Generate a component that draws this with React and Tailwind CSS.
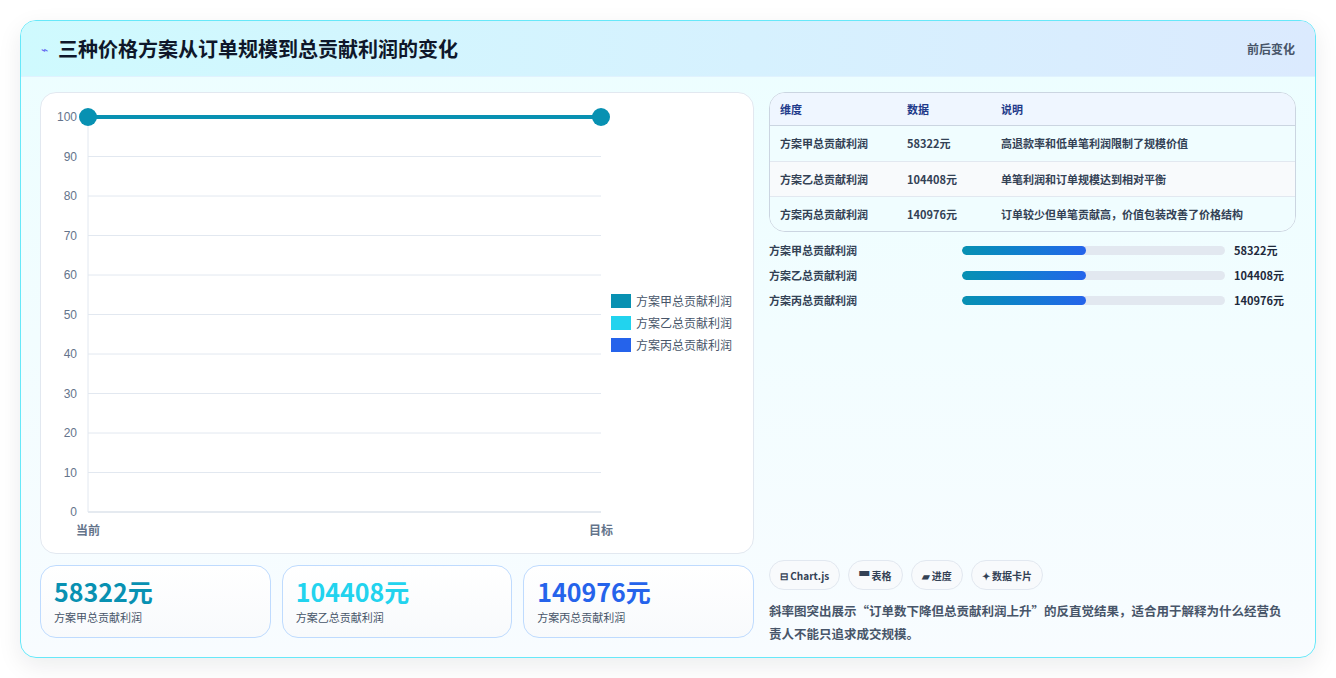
const rows = [
  { name: "方案甲总贡献利润", value: "58322元", note: "高退款率和低单笔利润限制了规模价值", color: "text-[#0891b2]" },
  { name: "方案乙总贡献利润", value: "104408元", note: "单笔利润和订单规模达到相对平衡", color: "text-[#22d3ee]" },
  { name: "方案丙总贡献利润", value: "140976元", note: "订单较少但单笔贡献高，价值包装改善了价格结构", color: "text-[#2563eb]" },
];

function Chart() {
  const ticks = [0, 10, 20, 30, 40, 50, 60, 70, 80, 90, 100];
  const y = (v) => 419 - (v / 100) * 395;
  const legend = [
    ["#0891b2", "方案甲总贡献利润"],
    ["#22d3ee", "方案乙总贡献利润"],
    ["#2563eb", "方案丙总贡献利润"],
  ];
  return (
    <svg width="713" height="460" className="block" style={{ fontFamily: "'Liberation Sans', 'Noto Sans CJK SC', sans-serif" }}>
      {ticks.map((t) => (
        <g key={t}>
          <line x1="47" x2="560" y1={y(t)} y2={y(t)} stroke={t === 0 ? "#cbd5e1" : "#e2e8f0"} />
          <text x="36" y={y(t) + 4} textAnchor="end" fontSize="12" fill="#64748b">{t}</text>
        </g>
      ))}
      <line x1="47" x2="47" y1="24" y2="419" stroke="#e2e8f0" />
      <line x1="47" x2="560" y1={y(100)} y2={y(100)} stroke="#0891b2" strokeWidth="4" />
      <circle cx="47" cy={y(100)} r="9" fill="#0891b2" />
      <circle cx="560" cy={y(100)} r="9" fill="#0891b2" />
      <text x="47" y="442" textAnchor="middle" fontSize="12" fontWeight="bold" fill="#64748b">当前</text>
      <text x="560" y="442" textAnchor="middle" fontSize="12" fontWeight="bold" fill="#64748b">目标</text>
      {legend.map(([c, l], i) => (
        <g key={l}>
          <rect x="570" y={201 + i * 22} width="20" height="14" fill={c} />
          <text x="595" y={213 + i * 22} fontSize="12" fill="#475569">{l}</text>
        </g>
      ))}
    </svg>
  );
}

export default function App() {
  return (
    <div className="w-[1336px] h-[678px] bg-white p-5 pb-0" style={{ fontFamily: "'Noto Sans CJK SC', 'Liberation Sans', sans-serif" }}>
      <div className="h-[638px] rounded-2xl border border-[#67e8f9] overflow-hidden bg-gradient-to-b from-[#ecfeff] to-[#f8fcff] shadow-[0_8px_24px_rgba(15,23,42,0.08)]">
        <div className="h-[56px] flex items-center justify-between px-5 bg-gradient-to-r from-[#cffafe] to-[#dbeafe] border-b border-[#e0f2fe]">
          <div className="flex items-center gap-2.5">
            <span className="text-[12px] text-[#6366f1]">⌁</span>
            <h1 className="text-[20px] font-bold text-[#0f172a]">三种价格方案从订单规模到总贡献利润的变化</h1>
          </div>
          <span className="text-[12px] font-semibold text-[#475569]">前后变化</span>
        </div>
        <div className="flex gap-[15px] px-[19px] pt-[15px]">
          <div className="w-[714px] flex flex-col gap-[11px]">
            <div className="h-[462px] rounded-2xl border border-[#e2e8f0] bg-white overflow-hidden">
              <Chart />
            </div>
            <div className="grid grid-cols-3 gap-[11px]">
              {rows.map((r) => (
                <div key={r.name} className="h-[73px] rounded-2xl border border-[#bfdbfe] bg-gradient-to-b from-white to-[#f8fafc] px-[13px] pt-[9px]">
                  <div className={`text-[25px] font-bold leading-[33px] ${r.color}`}>{r.value}</div>
                  <div className="text-[11px] text-[#475569] mt-[1px]">{r.name}</div>
                </div>
              ))}
            </div>
          </div>
          <div className="w-[529px] flex flex-col">
            <div className="rounded-2xl border border-[#cbd5e1] overflow-hidden bg-white text-[11px]">
              <div className="h-[33px] flex items-center bg-[#eff6ff] border-b border-[#cbd5e1] font-semibold text-[#1e3a8a]">
                <div className="w-[137px] pl-[10px]">维度</div>
                <div className="w-[94px]">数据</div>
                <div>说明</div>
              </div>
              {rows.map((r, i) => (
                <div key={r.name} className={`h-[35px] flex items-center font-semibold text-[#334155] ${i > 0 ? "border-t border-[#e2e8f0]" : ""} ${i === 1 ? "bg-[#f8fafc]" : "bg-[#f0fdff]"}`}>
                  <div className="w-[137px] pl-[10px]">{r.name}</div>
                  <div className="w-[94px]">{r.value}</div>
                  <div>{r.note}</div>
                </div>
              ))}
            </div>
            <div className="flex flex-col gap-[9px] mt-[10px]">
              {rows.map((r) => (
                <div key={r.name} className="h-[16px] flex items-center text-[11px] font-semibold text-[#334155]">
                  <div className="w-[193px]">{r.name}</div>
                  <div className="w-[263px] h-[9px] rounded-full bg-[#e2e8f0] overflow-hidden">
                    <div className="w-[124px] h-full rounded-full bg-gradient-to-r from-[#0891b2] to-[#2563eb]" />
                  </div>
                  <div className="ml-[9px] font-bold text-[#1e293b]">{r.value}</div>
                </div>
              ))}
            </div>
            <div className="flex gap-2 mt-[252px]">
              {["⊟ Chart.js", "▀ 表格", "▰ 进度", "✦ 数据卡片"].map((c) => (
                <span key={c} className="h-[30px] px-[10px] flex items-center rounded-full border border-[#e2e8f0] bg-[#f8fafc] text-[10px] font-semibold text-[#334155]">{c}</span>
              ))}
            </div>
            <p className="mt-[9px] w-[522px] text-[12.5px] leading-[23px] font-semibold text-[#475569]">
              斜率图突出展示“订单数下降但总贡献利润上升”的反直觉结果，适合用于解释为什么经营负责人不能只追求成交规模。
            </p>
          </div>
        </div>
      </div>
    </div>
  );
}
